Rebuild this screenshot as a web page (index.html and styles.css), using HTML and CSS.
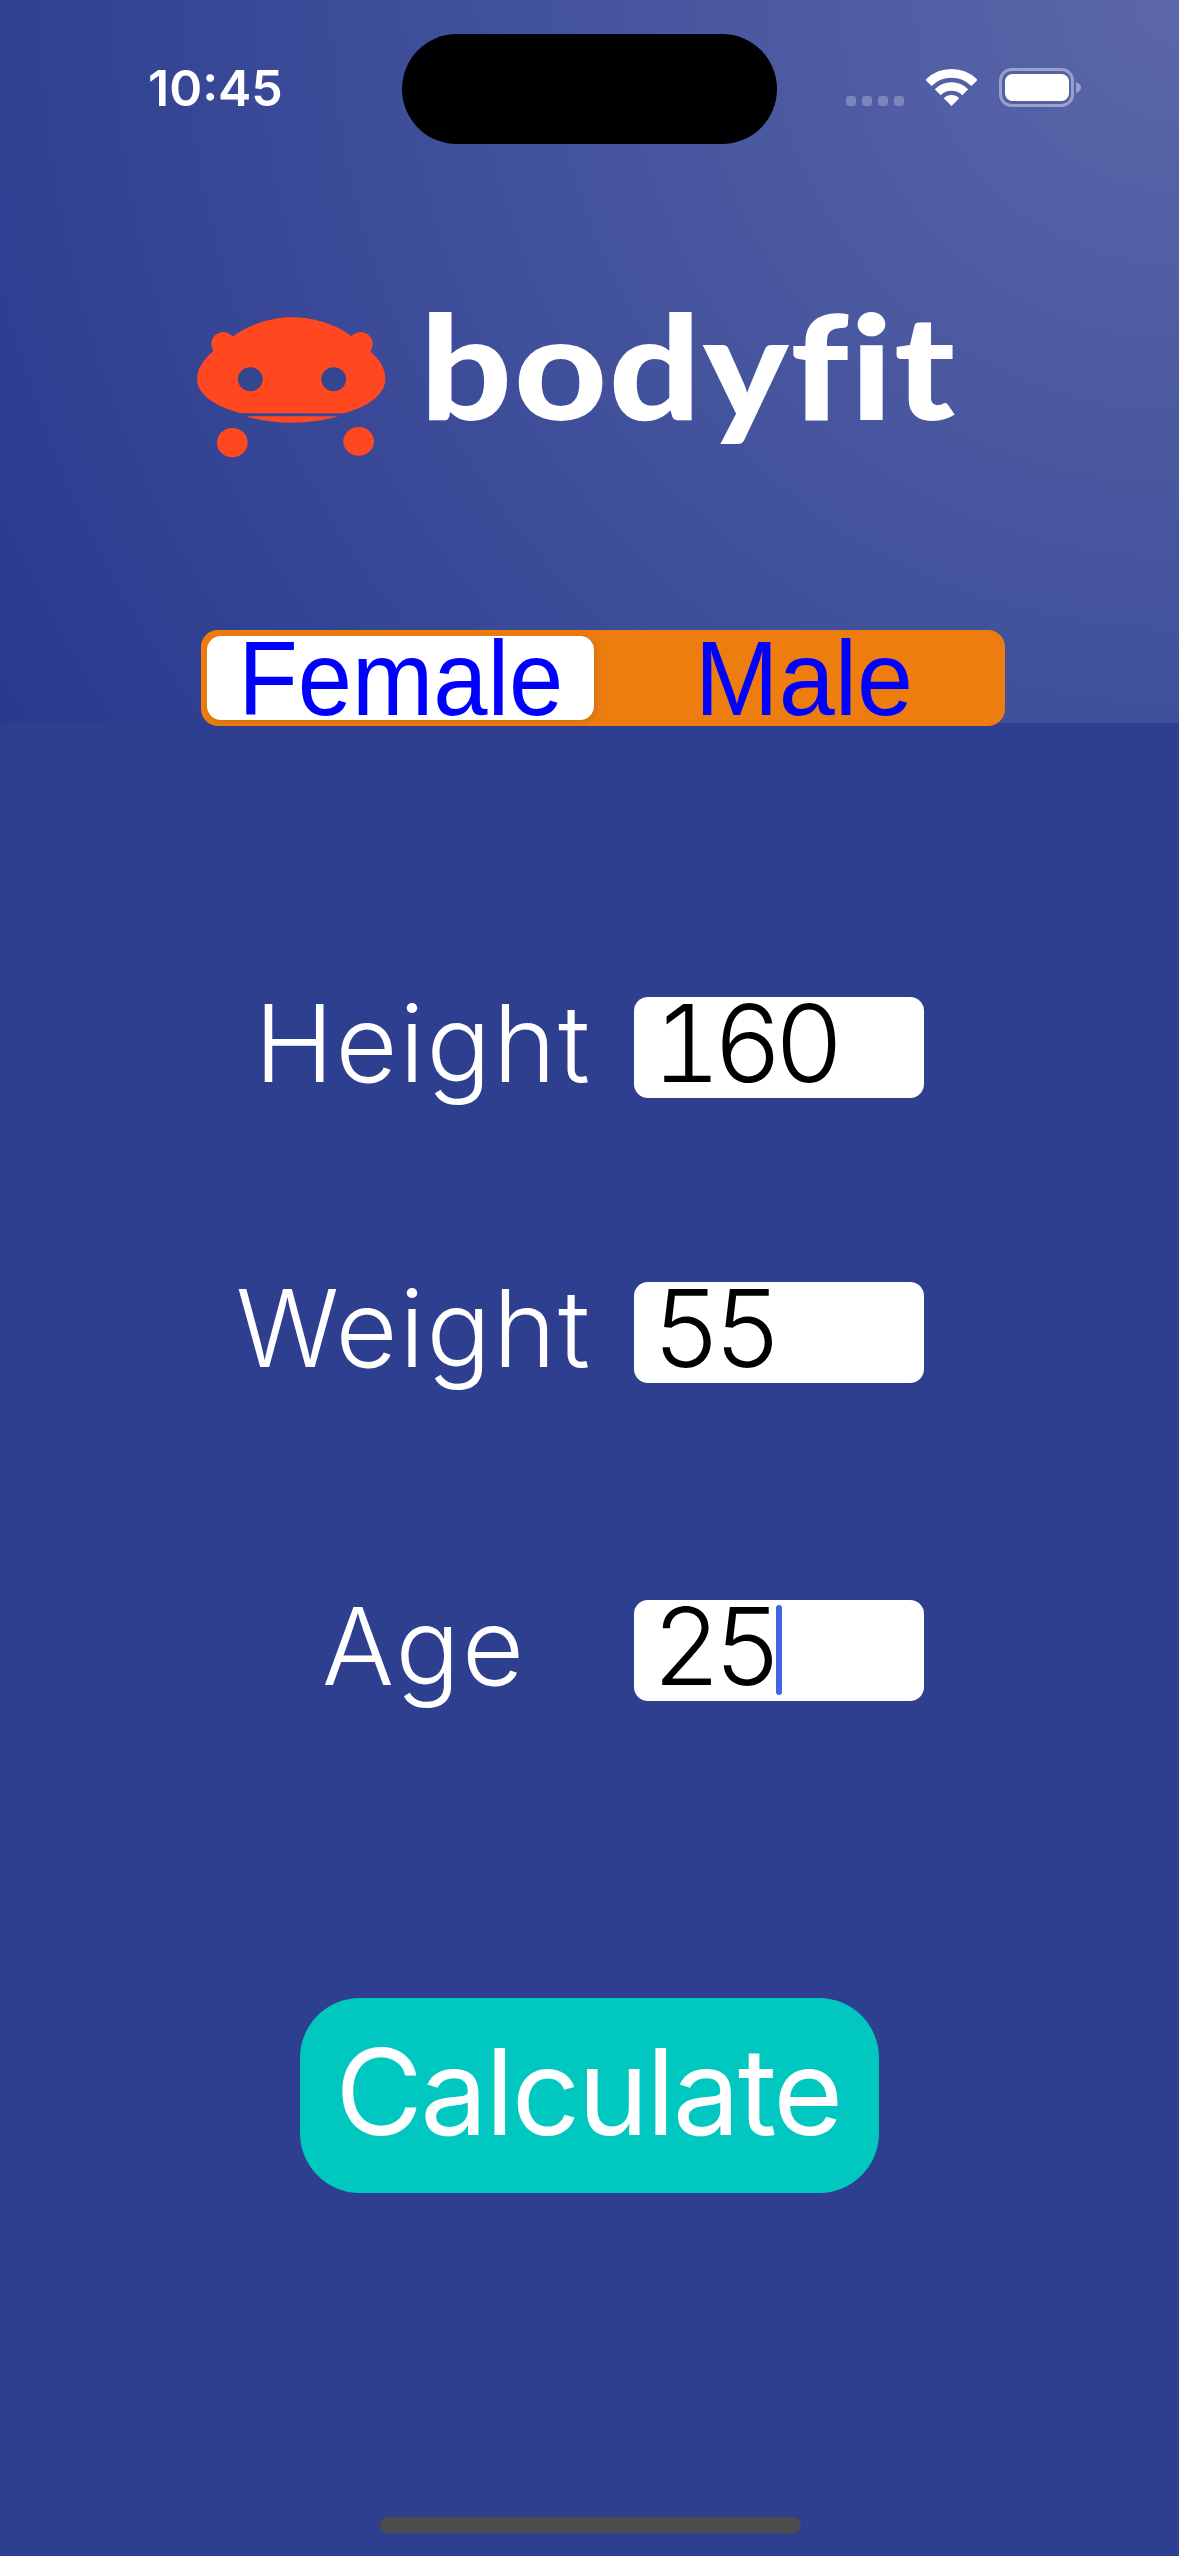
FILE: index.html
```html
<!DOCTYPE html>
<html lang="en">
<head>
<meta charset="UTF-8">
<meta name="viewport" content="width=device-width, initial-scale=1.0">
<title>bodyfit</title>
<link rel="stylesheet" href="styles.css">
</head>
<body>
<header class="hero">
  <div class="status-bar">
    <div class="time">10:45</div>
    <div class="island"></div>
    <div class="status-icons">
      <div class="signal"><span></span><span></span><span></span><span></span></div>
      <svg class="wifi" viewBox="288 58 152 110" width="51" height="37">
        <path d="M295.4 99.4a97 97 0 0 1 137.2 0" fill="none" stroke="#fff" stroke-width="26"/>
        <path d="M323 127a58 58 0 0 1 82 0" fill="none" stroke="#fff" stroke-width="25"/>
        <path d="M364 168L341 145a33 33 0 0 1 46 0Z" fill="#fff"/>
      </svg>
      <svg class="battery" viewBox="0 0 82 39" width="82" height="39">
        <rect x="1.5" y="1.5" width="72" height="36" rx="11" fill="none" stroke="#fff" stroke-opacity="0.4" stroke-width="3"/>
        <rect x="6" y="6" width="64" height="27" rx="7.5" fill="#fff"/>
        <path d="M77 14c3 1 5 3 5 5.500s-2 4.500-5 5.500Z" fill="#fff" fill-opacity="0.4"/>
      </svg>
    </div>
  </div>

  <div class="logo">
    <svg class="logo-mark" viewBox="0 0 720 510" width="240" height="170">
      <g fill="#ff4820">
        <path d="M51 237C51 195 85 165 115 140L165 105C215 70 280 52 335 52C395 52 460 70 510 105L560 145C590 170 616 197 616 237C616 285 560 322 490 340L185 340C110 322 51 285 51 237Z"/>
        <circle cx="130" cy="132" r="36"/>
        <circle cx="542" cy="132" r="36"/>
        <path d="M198 349L475 349C430 362 385 368 335 368C285 368 240 362 198 349Z"/>
        <ellipse cx="157" cy="428" rx="46" ry="44"/>
        <ellipse cx="536" cy="424" rx="46" ry="43"/>
      </g>
      <g fill="#35458f">
        <ellipse cx="211" cy="238" rx="37" ry="36"/>
        <ellipse cx="461" cy="238" rx="37" ry="36"/>
      </g>
    </svg>
    <div class="logo-text">bodyfit</div>
  </div>

  <div class="gender-switch">
    <div class="gender-option selected"><span class="gender-name">Female</span></div>
    <div class="gender-option option-male"><span class="gender-name">Male</span></div>
  </div>
</header>

<main class="form">
  <div class="row">
    <div class="row-label">Height</div>
    <div class="field"><span class="field-value">160</span></div>
  </div>
  <div class="row row-weight">
    <div class="row-label">Weight</div>
    <div class="field"><span class="field-value">55</span></div>
  </div>
  <div class="row row-age">
    <div class="row-label label-age">Age</div>
    <div class="field"><span class="field-value">25</span><span class="caret"></span></div>
  </div>
  <button class="calculate">Calculate</button>
</main>

<div class="home-bar"></div>
</body>
</html>
```

FILE: styles.css
```css
body {
  margin: 0;
  width: 1179px;
  height: 2556px;
  overflow: hidden;
  background-color: #2e3f8f;
  font-family: "Inter", "Lato", sans-serif;
  color: #fff;
}

/* top part with the gradient */
.hero {
  height: 723px;
  background: radial-gradient(circle 1383px at top right, #5b67a9 0%, #283a8e 100%);
}
.status-bar {
  display: grid;
  grid-template-columns: 402px 375px 1fr;
  height: 144px;
}
.time {
  padding: 58px 0 0 148px;
  font-family: "Inter", sans-serif;
  font-weight: 600;
  font-size: 50px;
  line-height: 60px;
}
.island {
  margin-top: 34px;
  height: 110px;
  background-color: #000;
  border-radius: 55px;
}
.status-icons {
  display: flex;
  align-items: flex-start;
  padding: 68px 0 0 69px;
}
.signal {
  display: flex;
  gap: 6px;
  margin-top: 28px;
}
.signal span {
  width: 10px;
  height: 10px;
  border-radius: 3px;
  background-color: rgba(255, 255, 255, 0.25);
}
.wifi {
  margin: 1px 0 0 22px;
}
.battery {
  margin-left: 22px;
}

.logo {
  display: flex;
  align-items: flex-start;
  padding: 156px 0 0 180px;
  height: 170px;
}
.logo-text {
  margin-top: -20px;
  font-family: "Lato", sans-serif;
  font-weight: 900;
  font-size: 144px;
  line-height: 170px;
  letter-spacing: 1.600px;
  transform: scaleX(1.12);
  transform-origin: left center;
}

.gender-switch {
  display: flex;
  box-sizing: border-box;
  width: 804px;
  height: 96px;
  margin: 160px 0 0 201px;
  padding: 6px;
  background-color: #ee7d10;
  border-radius: 17px;
}
.gender-option {
  flex: 1;
  text-align: center;
  font-family: "Liberation Sans", Arial, sans-serif;
  font-size: 106px;
  line-height: 84px;
  color: #00f;
}
.gender-name {
  display: inline-block;
  transform: scaleX(0.92);
}
.gender-option.selected {
  flex: 0 0 387px;
  background-color: #fff;
  border-radius: 14px;
  box-shadow: 2px 2px 8px rgba(0, 0, 0, 0.12);
}
.option-male {
  padding-left: 14px;
}
.option-male .gender-name {
  transform: scaleX(0.95);
}

.form {
  display: flex;
  flex-direction: column;
  padding-top: 274px;
}
.row {
  display: flex;
  height: 101px;
  padding-left: 232px;
}
.row-weight {
  margin-top: 184px;
}
.row-age {
  margin-top: 217px;
}
.row-label {
  box-sizing: border-box;
  width: 360px;
  margin-right: 42px;
  text-align: right;
  font-weight: 300;
  font-size: 107px;
  line-height: 93px;
  letter-spacing: 2px;
}
.label-age {
  padding-right: 66px;
}
.field {
  display: flex;
  box-sizing: border-box;
  width: 290px;
  height: 101px;
  padding-left: 18px;
  background-color: #fff;
  border-radius: 14px;
  color: #000;
  font-weight: 300;
  font-size: 107px;
  line-height: 93px;
  font-variant-numeric: tabular-nums;
}
.field-value {
  letter-spacing: -8px;
}
.caret {
  width: 6px;
  height: 90px;
  margin: 5px 0 0 2px;
  background-color: #4066e6;
  border-radius: 3px;
}

.calculate {
  display: block;
  width: 579px;
  height: 195px;
  margin: 297px 0 0 300px;
  padding: 0 3px 8px 0;
  border: none;
  border-radius: 60px;
  background-color: #00c8c0;
  color: #fff;
  font-family: "Inter", sans-serif;
  font-weight: 400;
  font-size: 120px;
  letter-spacing: -2.500px;
}

.home-bar {
  position: absolute;
  left: 380px;
  top: 2517px;
  width: 421px;
  height: 16px;
  border-radius: 8px;
  background-color: #4c4c4c;
}
```
